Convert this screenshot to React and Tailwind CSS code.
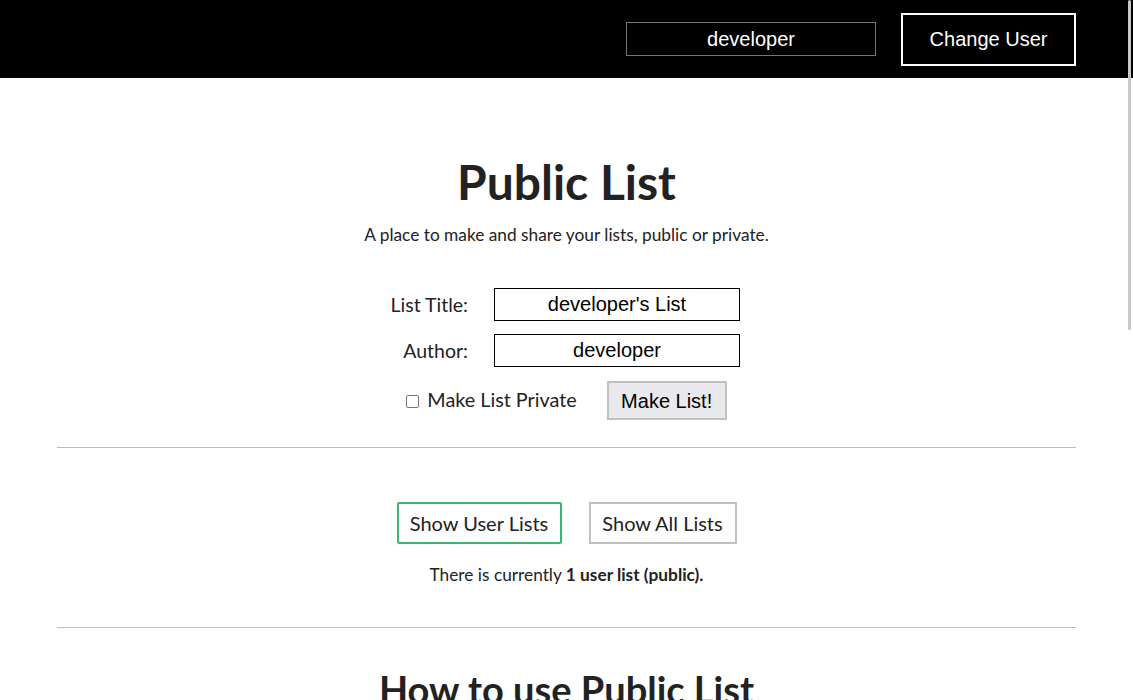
export default function App() {
  const ui = { fontFamily: '"Lato", "Open Sans", sans-serif' };
  const arial = { fontFamily: '"Liberation Sans", Arial, sans-serif' };

  return (
    <div className="min-h-screen bg-white text-[#222]" style={ui}>
      <header className="h-[78px] bg-black flex items-center justify-end pr-[57px]">
        <input
          className="w-[250px] h-[34px] border border-[#777] bg-black text-white text-center text-[20px] outline-none mr-[25px]"
          style={arial}
          defaultValue="developer"
        />
        <button
          className="w-[175px] h-[53px] border-2 border-white bg-black text-white text-[20px]"
          style={arial}
        >
          Change User
        </button>
      </header>

      <main className="w-[90%] mx-auto flex flex-col items-center">
        <h1 className="mt-[76px] text-[48px] leading-[56px] font-bold">Public List</h1>
        <p className="mt-[14px] text-[17.3px] leading-[22px]">
          A place to make and share your lists, public or private.
        </p>

        <div className="mt-[42px] flex flex-col items-center">
          <div className="flex items-center gap-[26px]">
            <label className="w-[75px] flex justify-end text-[19.5px] whitespace-nowrap">List Title:</label>
            <input
              className="w-[246px] h-[33px] border border-black text-center text-black text-[20px] outline-none"
              style={arial}
              defaultValue="developer's List"
            />
          </div>
          <div className="mt-[13px] flex items-center gap-[26px]">
            <label className="w-[75px] flex justify-end text-[19.5px] whitespace-nowrap">Author:</label>
            <input
              className="w-[246px] h-[33px] border border-black text-center text-black text-[20px] outline-none"
              style={arial}
              defaultValue="developer"
            />
          </div>
          <div className="mt-[14px] flex items-center gap-[30px]">
            <label className="flex items-center gap-[8px] text-[19.8px]">
              <span className="mt-[2px] w-[13px] h-[13px] border-[1.5px] border-[#767676] rounded-[2px]" />
              <span className="-mt-[2px]">Make List Private</span>
            </label>
            <button
              className="w-[120px] h-[39px] border-2 border-[#c0c0c0] bg-[#e9e9ed] text-[20px] text-black"
              style={arial}
            >
              Make List!
            </button>
          </div>
        </div>

        <hr className="w-full mt-[27px] border-t border-[#bbb]" />

        <div className="mt-[54px] flex items-center gap-[27px]">
          <button className="w-[165px] h-[42px] border-2 border-[#3cb371] rounded-[2px] text-[20px]">
            Show User Lists
          </button>
          <button className="w-[148px] h-[42px] border-2 border-[#c0c0c0] text-[20px]">
            Show All Lists
          </button>
        </div>
        <p className="mt-[20px] text-[17.3px] leading-[22px]">
          There is currently <b>1 user list (public).</b>
        </p>

        <hr className="w-full mt-[41px] border-t border-[#bbb]" />

        <h2 className="mt-[37px] text-[38px] leading-[48px] font-bold whitespace-nowrap">How to use Public List</h2>
      </main>

      <div className="fixed top-0 right-[2px] w-[3px] h-[330px] bg-[#c8c8c8] rounded-full" />
    </div>
  );
}
